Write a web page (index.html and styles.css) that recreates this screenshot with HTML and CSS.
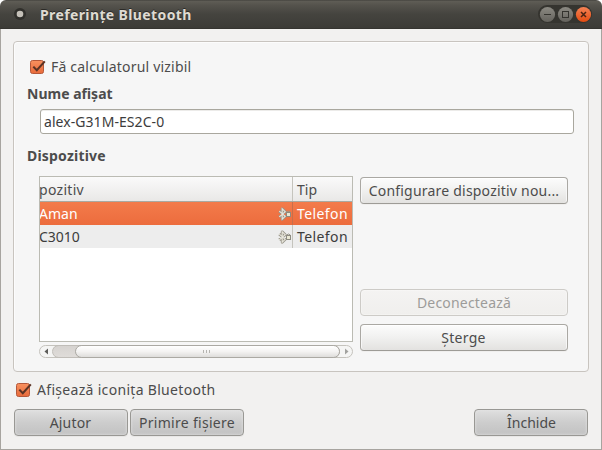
FILE: index.html
```html
<!DOCTYPE html>
<html lang="ro">
<head>
<meta charset="utf-8">
<title>Preferințe Bluetooth</title>
<link rel="stylesheet" href="styles.css">
</head>
<body>
<svg class="defs" width="0" height="0" aria-hidden="true">
  <defs>
    <linearGradient id="orange" x1="0" y1="0" x2="0" y2="1"><stop offset="0" stop-color="#f8915f"/><stop offset="1" stop-color="#e86a3a"/></linearGradient>
    <symbol id="check" viewBox="0 0 17 16">
      <rect x="0.5" y="1.5" width="13" height="13" rx="2" fill="url(#orange)" stroke="#b4583a"/>
      <path d="M3.3 7.6 L6.8 11.3 L14.8 2.4" fill="none" stroke="#5b3324" stroke-width="2.1"/>
    </symbol>
    <symbol id="paired" viewBox="0 0 14 14">
      <path d="M1.3 4.1 L7.2 9.3 L4.2 12.2 V1.8 L7.2 4.7 L1.3 9.9" fill="none" stroke="#98958a" stroke-width="2.8" stroke-linejoin="round"/>
      <path d="M1.3 4.1 L7.2 9.3 L4.2 12.2 V1.8 L7.2 4.7 L1.3 9.9" fill="none" stroke="#e9e7dc" stroke-width="1.1"/>
      <path d="M9 5.5 V4.8 Q10.5 3.2 12 4.8 V5.5" fill="none" stroke="#98958a"/>
      <rect x="8.5" y="5.5" width="4" height="4" fill="#e9e7d3" stroke="#8d8b80"/>
    </symbol>
  </defs>
</svg>
<div class="window">
  <header class="titlebar">
    <svg class="menu-dot" width="14" height="14" viewBox="0 0 14 14"><circle cx="7" cy="7" r="6" fill="#302f2b"/><circle cx="7" cy="7" r="3.3" fill="#c4c0b8"/></svg>
    <h1 class="title">Preferințe Bluetooth</h1>
    <svg class="controls" width="54" height="20" viewBox="0 0 54 20">
      <rect x="0" y="1" width="54" height="18" rx="9" fill="#35342f"/>
      <defs><linearGradient id="gray" x1="0" y1="0" x2="0" y2="1"><stop offset="0" stop-color="#8c8a83"/><stop offset="1" stop-color="#64625c"/></linearGradient>
      <linearGradient id="close" x1="0" y1="0" x2="0" y2="1"><stop offset="0" stop-color="#f58356"/><stop offset="1" stop-color="#e44b10"/></linearGradient></defs>
      <circle cx="9.5" cy="10.5" r="7.6" fill="url(#gray)"/><circle cx="27.5" cy="10.5" r="7.6" fill="url(#gray)"/><circle cx="45.5" cy="10.5" r="7.6" fill="url(#close)"/>
      <path d="M6 10.5 H13" stroke="#34332e"/>
      <rect x="24.5" y="7.5" width="6" height="6" fill="none" stroke="#34332e"/>
      <path d="M43 8 L48 13 M48 8 L43 13" stroke="#4a2414" stroke-width="1.5"/>
    </svg>
  </header>
  <main class="content">
    <section class="panel">
      <div class="check-row"><svg class="check" width="17" height="16"><use href="#check"/></svg><span class="t-visible">Fă calculatorul vizibil</span></div>
      <h2 class="heading t-name">Nume afișat</h2>
      <div class="entry"><span class="t-entry">alex-G31M-ES2C-0</span></div>
      <h2 class="heading t-devices">Dispozitive</h2>
      <div class="devices">
        <div class="list">
          <div class="table">
            <div class="row head"><span class="device t-col">pozitiv</span><span class="type t-tip">Tip</span></div>
            <div class="row selected"><span class="device t-aman">Aman</span><svg class="paired" width="14" height="14"><use href="#paired"/></svg><span class="type t-phone">Telefon</span></div>
            <div class="row alternate"><span class="device t-c">C3010</span><svg class="paired" width="14" height="14"><use href="#paired"/></svg><span class="type t-phone">Telefon</span></div>
          </div>
          <div class="scrollbar">
            <svg class="arrow" width="12" height="11" viewBox="0 0 12 11"><path d="M8 2.5 V8.5 L4.5 5.5Z" fill="#5d5d5a"/></svg>
            <div class="trough"><div class="thumb"><i></i><i></i><i></i></div></div>
            <svg class="arrow" width="12" height="11" viewBox="0 0 12 11"><path d="M5 2.5 V8.5 L8.5 5.5Z" fill="#a2a29f"/></svg>
          </div>
        </div>
        <div class="actions">
          <div class="button"><span class="t-config">Configurare dispozitiv nou...</span></div>
          <div class="button disabled"><span class="t-disc">Deconectează</span></div>
          <div class="button"><span class="t-del">Șterge</span></div>
        </div>
      </div>
    </section>
    <div class="check-row outer"><svg class="check" width="17" height="16"><use href="#check"/></svg><span class="t-icon">Afișează iconița Bluetooth</span></div>
    <footer class="footer">
      <div class="button dark"><span class="t-help">Ajutor</span></div>
      <div class="button dark"><span class="t-recv">Primire fișiere</span></div>
      <div class="button dark last"><span class="t-close">Închide</span></div>
    </footer>
  </main>
</div>
</body>
</html>
```
FILE: styles.css
```css
* { box-sizing: border-box; }
body { margin: 0; background: #fff; font: 14px/20px "Noto Sans", "Open Sans", sans-serif; color: #4c4c4c; overflow: hidden; white-space: nowrap; }
h1, h2 { margin: 0; font-size: 14px; line-height: 20px; font-weight: 700; }
.defs { display: block; height: 0; }
.window { width: 602px; height: 450px; border-radius: 6px 6px 0 0; overflow: hidden; background: #f2f1f0; display: flex; flex-direction: column; }
.titlebar { height: 29px; flex: none; display: flex; align-items: center; padding: 0 10px 0 13px; background: linear-gradient(#3c3b37 0, #5f5d56 1px, #55534d 5px, #45443f 14px, #3c3b37 28px); border-bottom: 1px solid #353430; }
.title { margin-left: 13px; padding-top: 2px; color: #dfdbd2; letter-spacing: .38px; text-shadow: 0 -1px #2b2a27; }
.controls { margin-left: auto; }
.content { flex: 1; padding: 12px; border: 1px solid #a7a49f; border-top: 0; }
.panel { height: 331px; width: 576px; border: 1px solid #c8c4bf; border-radius: 4px; background: #f6f6f6; padding: 15px 13px 0; box-shadow: inset 1px 1px #fcfcfc; }
.check-row { display: flex; align-items: center; height: 20px; gap: 4px; padding-left: 3px; }
.check { display: block; margin-top: -1px; }
.heading { height: 20px; }
.t-name { margin-top: 7px; }
.entry { margin: 5px 0 0 13px; width: 534px; height: 25px; border: 1px solid #a9a79e; border-radius: 3px; background: #fff; padding: 2px 3px; color: #3c3c3c; box-shadow: inset 0 1px #ecebe9; }
.t-devices { margin-top: 12px; letter-spacing: .2px; }
.t-visible { letter-spacing: .2px; }
.t-entry { letter-spacing: .06px; }
.t-icon { letter-spacing: .31px; }
.t-config { letter-spacing: .21px; }
.t-disc { letter-spacing: .2px; }
.t-del { letter-spacing: .3px; margin-right: 1px; }
.t-help { letter-spacing: .2px; margin-right: 1px; }
.t-recv { letter-spacing: .3px; }
.t-close { margin-left: 1px; }
.devices { display: flex; gap: 7px; margin: 10px 0 0 12px; }
.list { width: 314px; }
.table { height: 166px; border: 1px solid #bbbbb3; background: #fff; overflow: hidden; }
.row { display: flex; height: 23px; align-items: center; color: #3c3c3c; }
.row .device { width: 238px; flex: none; text-indent: -1px; }
.row .type { width: 60px; margin-left: auto; height: 100%; border-left: 1px solid #c5c4bd; padding: 1px 0 0 4px; line-height: 21px; }
.row .t-phone { letter-spacing: .4px; }
.head { height: 25px; background: linear-gradient(#fafafa, #e9e8e7); border-bottom: 1px solid #aaa9a1; color: #4c4c4c; }
.head .type { padding-top: 2px; }
.head .t-col { letter-spacing: .3px; padding-top: 1px; }
.device { overflow: hidden; }
.selected { background: linear-gradient(#f37b4b, #ec6c3d); color: #fff; }
.selected .type { border-color: #c96e4a; }
.alternate { background: #ededed; }
.scrollbar { margin-top: 3px; height: 13px; display: flex; border: 1px solid #c5c3bd; border-radius: 7px; background: #f5f5f4; }
.arrow { display: block; flex: none; }
.trough { flex: 1; margin: -1px 0; padding-left: 23px; border: 1px solid #c0bdb8; border-radius: 7px; background: linear-gradient(#d6d3d0, #dfdcd9); }
.thumb { height: 13px; margin: -1px; border: 1px solid #aba9a3; border-radius: 7px; background: linear-gradient(#fff, #f4f3f2 50%, #dedddb); display: flex; justify-content: center; align-items: center; gap: 2px; padding-right: 3px; }
.thumb i { width: 1px; height: 3px; background: #b5b4b0; }
.actions { display: flex; flex-direction: column; width: 208px; padding-top: 1px; }
.button { height: 27px; border: 1px solid #aaa8a3; border-bottom-color: #9d9b96; border-radius: 4px; background: linear-gradient(#fcfcfc, #f2f2f1 45%, #e3e2e0); display: flex; justify-content: center; align-items: center; padding-top: 1px; box-shadow: inset 0 1px #fff, inset 1px 0 #f7f7f7, inset -1px 0 #f7f7f7, 0 1px #f0efee; flex: none; }
.disabled { margin: 85px 0 8px; color: #9d9c9a; border-color: #cdcbc7; background: linear-gradient(#f4f3f2, #f0efed); box-shadow: inset 0 0 2px #fff; }
.outer { margin-top: 8px; padding-left: 3px; }
.footer { display: flex; gap: 2px; margin: 9px 0 0 1px; width: 574px; }
.dark { width: 114px; border-color: #999894; background: linear-gradient(#dfdfdf, #cdcdcd 50%, #c2c2c2); box-shadow: inset 0 0 3px #e4e4e4, 0 1px #e8e7e6; }
.last { margin-left: auto; }
```
